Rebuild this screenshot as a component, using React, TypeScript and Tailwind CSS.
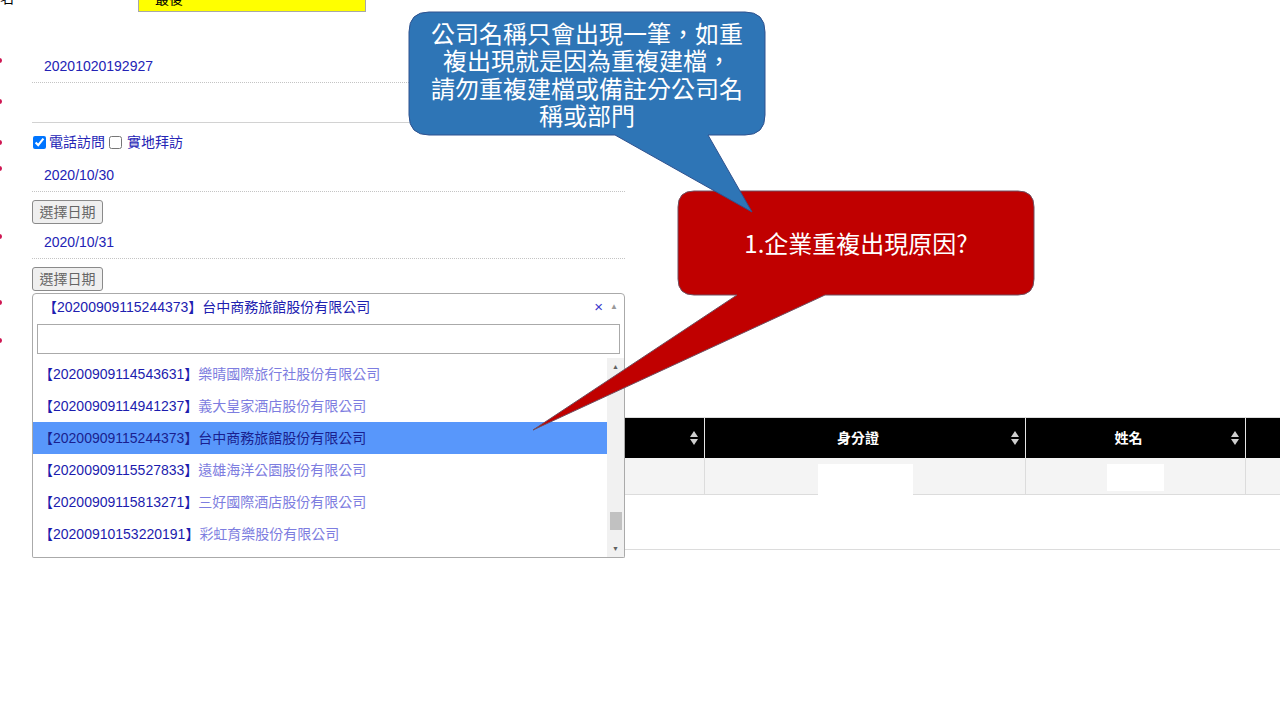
import React from "react";

const font = "font-['Liberation_Sans','Noto_Sans_CJK_TC',sans-serif]";

const options = [
  { id: "20200909114543631", name: "樂晴國際旅行社股份有限公司" },
  { id: "20200909114941237", name: "義大皇家酒店股份有限公司" },
  { id: "20200909115244373", name: "台中商務旅館股份有限公司", active: true },
  { id: "20200909115527833", name: "遠雄海洋公園股份有限公司" },
  { id: "20200909115813271", name: "三好國際酒店股份有限公司" },
  { id: "20200910153220191", name: "彩虹育樂股份有限公司" },
];

// red required-marks of the label column, scrolled almost out of view
const dots = ["mt-[46px]", "mt-[36px]", "mt-[36px]", "mt-[21px]", "mt-[63px]", "mt-[61px]", "mt-[33px]"];

// first two columns sit under the open dropdown
const columns = [
  { key: "c1", w: "w-[328px]", title: "" },
  { key: "c2", w: "w-[345px]", title: "" },
  { key: "c3", w: "w-[321px]", title: "身分證", box: "w-[95px] h-[31px]" },
  { key: "c4", w: "w-[220px]", title: "姓名", box: "w-[57px] h-[27px]" },
  { key: "c5", w: "w-[254px]", title: "" },
];

function SortIcon() {
  return (
    <svg width="8" height="14" viewBox="0 0 8 14">
      <path d="M4 0 L8 6 H0 Z" fill="#cfcfcf" />
      <path d="M0 8 H8 L4 14 Z" fill="#cfcfcf" />
    </svg>
  );
}

function DateRow({ value }: { value: string }) {
  return (
    <div className="h-[33px] flex items-center pl-3 border-b border-dotted border-[#c4c4c4] text-[14px] text-[#2323b5]">
      {value}
    </div>
  );
}

function PickButton({ className }: { className: string }) {
  return (
    <button className={`${className} h-[24px] w-[71px] rounded-[3px] border border-[#8a8a8a] bg-[#efefef] text-[14px] text-[#666] leading-none`}>
      選擇日期
    </button>
  );
}

function CompanySelect() {
  return (
    <div className="relative mt-[2px]">
      <div className="h-[28px] flex items-center pl-[10px] pr-[6px] border border-[#aaa] rounded-t-[4px] bg-white text-[14px] text-[#2020b0]">
        <span className="flex-1">【20200909115244373】台中商務旅館股份有限公司</span>
        <span className="text-[15px] text-[#3a3acc] mr-[7px]">×</span>
        <span className="text-[8px] text-[#999]">▲</span>
      </div>

      {/* open dropdown, lies over the table */}
      <div className="absolute left-0 top-[27px] z-10 w-[593px] h-[238px] bg-white border border-[#aaa] border-t-0 rounded-b-[2px] flex flex-col">
        <div className="px-[4px] pt-[4px]">
          <div className="h-[30px] border border-[#aaa] bg-white" />
        </div>
        <div className="flex mt-[4px] h-[199px] overflow-hidden">
          <ul className="flex-1 overflow-hidden">
            {options.map((o) => (
              <li
                key={o.id}
                className={`h-[32px] flex items-center pl-[6px] text-[14px] ${o.active ? "bg-[#5897fb] text-[#1a1f8f]" : ""}`}
              >
                <span className={o.active ? "" : "text-[#1c1cae]"}>【{o.id}】</span>
                <span className={o.active ? "" : "text-[#7d7de0]"}>{o.name}</span>
              </li>
            ))}
          </ul>
          <div className="w-[17px] bg-[#f1f1f1] flex flex-col items-center">
            <span className="h-[17px] text-[7px] text-[#606060] leading-[17px]">▲</span>
            <div className="mt-[137px] w-[12px] h-[18px] bg-[#c1c1c1]" />
            <span className="mt-auto h-[17px] text-[7px] text-[#606060] leading-[17px]">▼</span>
          </div>
        </div>
      </div>
    </div>
  );
}

export default function App() {
  return (
    <div className={`relative w-[1280px] h-[720px] overflow-hidden bg-white ${font}`}>
      {/* top strip, mostly scrolled away */}
      <div className="h-[12px] flex overflow-hidden">
        <span className="-mt-[9px] text-[14px] leading-[14px] text-black">名</span>
        <div className="ml-[124px] w-[228px] h-[12px] bg-[#ffff00] border-x border-b border-[#a8a8a8] pl-[16px]">
          <div className="-mt-[8px] text-[14px] leading-[14px] text-black">最後</div>
        </div>
      </div>

      <div className="flex h-[345px]">
        <div className="w-[32px] flex flex-col">
          {dots.map((d, i) => (
            <div key={i} className={`${d} -ml-[3px] w-[5px] h-[5px] rounded-full bg-[#cf1652]`} />
          ))}
        </div>

        <div className="w-[593px] flex flex-col">
          <div className="mt-[38px]">
            <DateRow value="20201020192927" />
          </div>
          <div className="h-[40px] border-b border-[#d2d2d2]" />

          <div className="mt-[9px] h-[20px] flex items-center text-[14px] text-[#2323b5]">
            <input type="checkbox" defaultChecked className="m-0 ml-[1px] w-[13px] h-[13px] accent-[#0075ff]" />
            <span className="ml-[3px]">電話訪問</span>
            <input type="checkbox" className="m-0 ml-[4px] w-[13px] h-[13px]" />
            <span className="ml-[5px]">實地拜訪</span>
          </div>

          <div className="mt-[7px]">
            <DateRow value="2020/10/30" />
          </div>
          <PickButton className="mt-[8px]" />
          <div className="mt-[2px]">
            <DateRow value="2020/10/31" />
          </div>
          <PickButton className="mt-[8px]" />

          <CompanySelect />
        </div>
      </div>

      {/* result table, partly hidden under the dropdown */}
      <div className="mt-[60px] ml-[32px] w-[1470px] border-t border-b border-[#dcdcdc]">
        <div className="flex h-[40px] bg-black">
          {columns.map((c) => (
            <div key={c.key} className={`${c.w} flex items-center border-r border-[#e6e6e6] pr-[6px]`}>
              <span className="flex-1 text-center text-[14px] font-bold text-white">{c.title}</span>
              <SortIcon />
            </div>
          ))}
        </div>
        <div className="flex h-[37px] bg-[#f4f4f4] border-b border-[#dcdcdc]">
          {columns.map((c) => (
            <div key={c.key} className={`${c.w} flex justify-center pt-[6px] border-r border-[#dcdcdc]`}>
              {c.box && <div className={`${c.box} bg-white`} />}
            </div>
          ))}
        </div>
        <div className="h-[54px]" />
      </div>

      {/* red callout */}
      <svg className="absolute left-0 top-0 z-20 pointer-events-none" width="1280" height="720">
        <path
          d="M694 191 H1018 Q1034 191 1034 207 V279 Q1034 295 1018 295 H825 L533 430 L737 295 H694 Q678 295 678 279 V207 Q678 191 694 191 Z"
          fill="#c00000"
          stroke="#6f4f60"
          strokeWidth="1"
        />
      </svg>
      <div className="absolute left-[678px] top-[191px] z-20 w-[356px] h-[104px] flex items-center justify-center text-[24px] text-white font-['Noto_Sans_CJK_TC','Liberation_Sans',sans-serif]">
        1.企業重複出現原因?
      </div>

      {/* blue callout */}
      <svg className="absolute left-0 top-0 z-30 pointer-events-none" width="1280" height="720">
        <path
          d="M429 12 H745 Q765 12 765 32 V115 Q765 135 745 135 H708 L752 212 L615 135 H429 Q409 135 409 115 V32 Q409 12 429 12 Z"
          fill="#2e75b6"
          stroke="#2f528f"
          strokeWidth="1"
        />
      </svg>
      <div className="absolute left-[409px] top-[12px] z-30 w-[356px] h-[123px] flex flex-col items-center justify-center text-center text-[24px] leading-[27.5px] text-white font-['Noto_Sans_CJK_TC','Liberation_Sans',sans-serif]">
        <span>公司名稱只會出現一筆，如重</span>
        <span>複出現就是因為重複建檔，</span>
        <span>請勿重複建檔或備註分公司名</span>
        <span>稱或部門</span>
      </div>
    </div>
  );
}
